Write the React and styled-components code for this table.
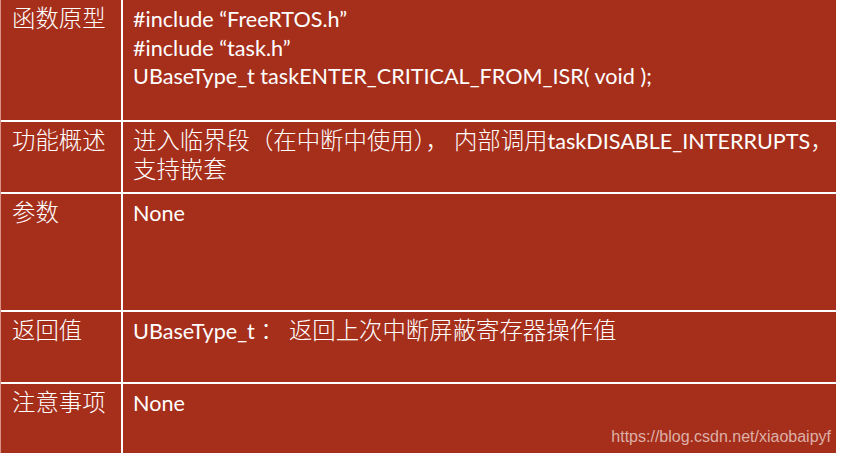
import React from "react";
import styled, { createGlobalStyle } from "styled-components";

const Global = createGlobalStyle`
  html, body { margin: 0; padding: 0; background: #ffffff; }
  body { width: 842px; height: 456px; overflow: hidden; }
`;

const Table = styled.div`
  position: relative;
  width: 836px;
  height: 453px;
  display: grid;
  grid-template-columns: 120px 1fr;
  grid-template-rows: 120px 70px 116px 70px 1fr;
  column-gap: 2px;
  row-gap: 2px;
  background: #ffffff;
  box-sizing: border-box;
  border-left: 1px solid #d9928a;
`;

const Cell = styled.div`
  background: #a62f1c;
  color: #ffffff;
  box-sizing: border-box;
  padding: ${(p) => (p.$label ? "5px 0 0 11px" : "5px 0 0 10px")};
  font-family: "Lato", "Noto Sans CJK SC", sans-serif;
  font-size: 21.6px;
  white-space: nowrap;
`;

const Line = styled.div`
  height: 28.5px;
  line-height: 28.5px;
`;

const Han = styled.span`
  font-family: "Noto Sans CJK SC", sans-serif;
  font-size: 23.4px;
  font-weight: 300;
  line-height: 1;
`;

const Watermark = styled.div`
  position: absolute;
  right: 5px;
  bottom: 7px;
  font-family: "Liberation Sans", Arial, sans-serif;
  font-size: 16px;
  line-height: 18px;
  color: #dcb0a8;
`;

const rows = [
  {
    label: "函数原型",
    lines: [
      <>#include “FreeRTOS.h”</>,
      <>#include “task.h”</>,
      <>UBaseType_t taskENTER_CRITICAL_FROM_ISR( void );</>,
    ],
  },
  {
    label: "功能概述",
    lines: [
      <>
        <Han>进入临界段（在中断中使用）， 内部调用</Han>taskDISABLE_INTERRUPTS<Han>，</Han>
      </>,
      <Han>支持嵌套</Han>,
    ],
  },
  { label: "参数", lines: [<>None</>] },
  {
    label: "返回值",
    lines: [
      <>
        UBaseType_t <Han>： 返回上次中断屏蔽寄存器操作值</Han>
      </>,
    ],
  },
  { label: "注意事项", lines: [<>None</>] },
];

export default function App() {
  return (
    <>
      <Global />
      <Table>
        {rows.map((r) => (
          <React.Fragment key={r.label}>
            <Cell $label>
              <Line>
                <Han>{r.label}</Han>
              </Line>
            </Cell>
            <Cell>
              {r.lines.map((l, i) => (
                <Line key={i}>{l}</Line>
              ))}
            </Cell>
          </React.Fragment>
        ))}
        <Watermark>https://blog.csdn.net/xiaobaipyf</Watermark>
      </Table>
    </>
  );
}
